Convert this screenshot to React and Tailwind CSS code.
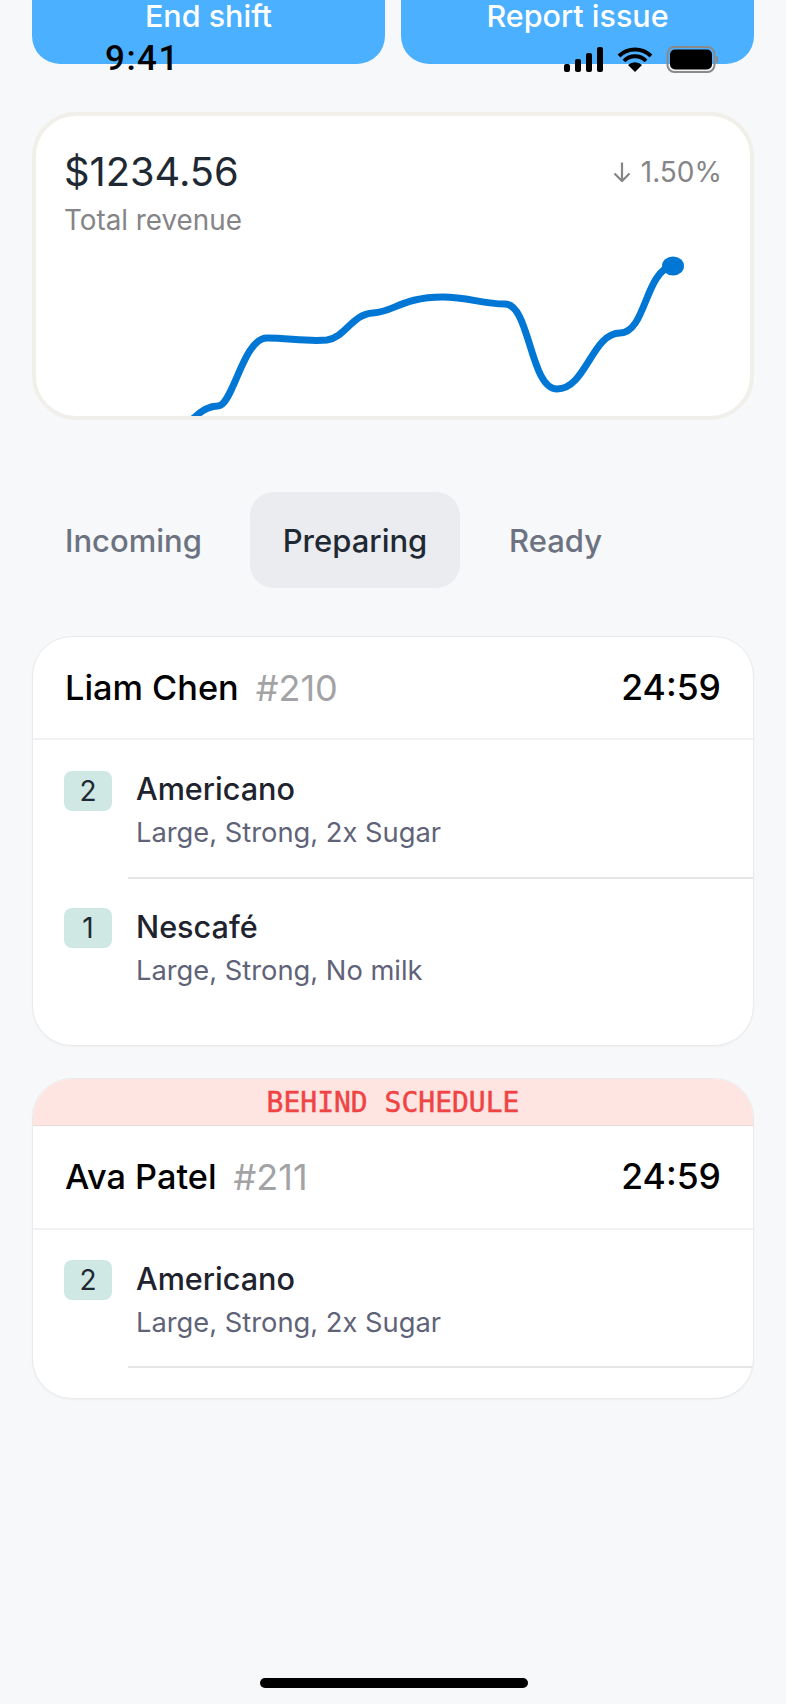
import React from "react";

const CURVE = "M190 422 C197 414 207 406 218 406 C233 406 243 338 267 338 C288 338 308 342 327 340 C346 337 352 314 373 313 C394 312 402 297 443 297 C468 297 482 304 505 304 C530 304 530 389 557 389 C586 389 592 333 620 333 C646 333 645 270 673 266";

function Item({ qty, name, opts, badgeTop, textTop, textBottom }) {
  return (
    <div className="flex">
      <div className="w-[103px] pl-[31px] shrink-0" style={{ paddingTop: badgeTop }}>
        <div className="w-[48px] h-[40px] rounded-[8px] bg-[#cfe8e4] flex items-center justify-center text-[28px] text-[#1f2933]">{qty}</div>
      </div>
      <div className="flex-1" style={{ paddingTop: textTop, paddingBottom: textBottom }}>
        <div className="text-[30.6px] leading-[44px] font-[450] text-[#20222e]">{name}</div>
        <div className="text-[27.3px] leading-[40px] text-[#5f6378] mt-[2px]">{opts}</div>
      </div>
    </div>
  );
}

function OrderHeader({ name, id, tall }) {
  return (
    <div className={`${tall ? "h-[104px]" : "h-[103px]"} border-b-2 border-[#f0f1f5] flex items-center justify-between px-[32px]`}>
      <div className="flex items-center gap-[17px]">
        <span className="text-[34.3px] font-[450] text-black">{name}</span>
        <span className="text-[36px] text-[#a3a3a5]">{id}</span>
      </div>
      <span className="text-[35.5px] font-[450] text-black">24:59</span>
    </div>
  );
}

export default function App() {
  return (
    <div className="relative w-[786px] h-[1704px] overflow-hidden bg-[#f6f8fa]" style={{ fontFamily: "Inter, sans-serif" }}>
      <div className="flex gap-[16px] px-[32px] h-[64px]">
        <button className="flex-1 pb-[32px] rounded-b-[28px] bg-[#4ab0ff] text-white text-[30.5px] leading-[34px] font-medium flex items-center justify-center">End shift</button>
        <button className="flex-1 pb-[32px] rounded-b-[28px] bg-[#4ab0ff] text-white text-[30.5px] leading-[34px] font-medium flex items-center justify-center">Report issue</button>
      </div>

      {/* status bar */}
      <div className="absolute left-[105px] top-[39px] text-[35px] leading-[40px] font-medium tracking-[1.5px] text-black" style={{ fontFamily: "Roboto, sans-serif" }}>9:41</div>
      <svg className="absolute left-[560px] top-[44px]" width="160" height="30" viewBox="0 0 160 30">
        <rect x="4" y="20" width="6" height="8" rx="2" fill="#000" />
        <rect x="15" y="15" width="6" height="13" rx="2" fill="#000" />
        <rect x="26" y="9" width="6" height="19" rx="2" fill="#000" />
        <rect x="37" y="3" width="6" height="25" rx="2" fill="#000" />
        <path d="M59 12 A23 23 0 0 1 91 12" fill="none" stroke="#000" strokeWidth="4" />
        <path d="M64 17 A15 15 0 0 1 86 17" fill="none" stroke="#000" strokeWidth="4" />
        <path d="M75 28 L68 21 A10 10 0 0 1 82 21 Z" fill="#000" />
        <rect x="107.5" y="3" width="47" height="25" rx="7" fill="none" stroke="#8a8a8a" strokeWidth="2" />
        <rect x="110" y="5.5" width="42" height="20" rx="5" fill="#000" />
        <rect x="156" y="12" width="2" height="7" rx="1" fill="#8a8a8a" />
      </svg>

      {/* revenue card */}
      <div className="relative mt-[48px] ml-[32px] w-[722px] h-[308px] rounded-[44px] border-4 border-[#f0efea] bg-white overflow-hidden">
        <div className="flex justify-between px-[28px] pt-[28px]">
          <div>
            <div className="text-[39.8px] leading-[56px] text-[#1f2933]">$1234.56</div>
            <div className="text-[27.8px] leading-[36px] mt-[2px] text-[#858587]">Total revenue</div>
          </div>
          <div className="flex items-center h-[56px] gap-[10px] text-[28px] text-[#858587]">
            <svg width="18" height="20" viewBox="0 0 18 20" fill="none" stroke="#858587" strokeWidth="2.2"><path d="M9 0.5V19M1.5 11.5L9 19L16.5 11.5" /></svg>
            <span>1.50%</span>
          </div>
        </div>
        <svg className="absolute left-[-36px] top-[-116px]" width="786" height="440" viewBox="0 0 786 440">
          <path d={CURVE} fill="none" stroke="#0077d4" strokeWidth="7" strokeLinecap="round" strokeLinejoin="round" />
          <ellipse cx="673" cy="266" rx="11" ry="9.5" fill="#0077d4" />
        </svg>
      </div>

      {/* tabs */}
      <div className="flex mt-[72px] pl-[32px] h-[96px] text-[31px] font-medium">
        <div className="w-[168px] rounded-[24px] pl-[33px] pt-[2px] flex items-center text-[#6c7280]">Incoming</div>
        <div className="ml-[50px] w-[210px] rounded-[24px] pt-[2px] bg-[#ebecf0] flex items-center justify-center text-[#1f2933]">Preparing</div>
        <div className="ml-[9px] px-[40px] rounded-[24px] pt-[2px] flex items-center text-[#6c7280]">Ready</div>
      </div>

      {/* order 1 */}
      <div className="mt-[48px] ml-[32px] w-[722px] h-[410px] rounded-[40px] border border-[#e9eaec] bg-white overflow-hidden shadow-[0_1px_2px_rgba(0,0,0,0.04)]">
        <OrderHeader name="Liam Chen" id="#210" />
        <Item qty="2" name="Americano" opts="Large, Strong, 2x Sugar" badgeTop={31} textTop={27} textBottom={24} />
        <div className="ml-[95px] h-[2px] bg-[#e4e5e7]" />
        <Item qty="1" name="Nescafé" opts="Large, Strong, No milk" badgeTop={29} textTop={26} textBottom={24} />
      </div>

      {/* order 2 */}
      <div className="mt-[32px] ml-[32px] w-[722px] h-[321px] rounded-[40px] border border-[#e9eaec] bg-white overflow-hidden shadow-[0_1px_2px_rgba(0,0,0,0.04)]">
        <div className="h-[47px] pt-[2px] bg-[#ffe5e2] border-b border-[#e8dbd9] flex items-center justify-center text-[28px] text-[#ef4444] [-webkit-text-stroke:0.5px_#ef4444]" style={{ fontFamily: "'DejaVu Sans Mono', monospace" }}>BEHIND SCHEDULE</div>
        <OrderHeader name="Ava Patel" id="#211" tall />
        <Item qty="2" name="Americano" opts="Large, Strong, 2x Sugar" badgeTop={30} textTop={27} textBottom={23} />
        <div className="ml-[95px] h-[2px] bg-[#e4e5e7]" />
      </div>

      <div className="absolute left-[260px] bottom-[16px] w-[268px] h-[10px] rounded-full bg-black" />
    </div>
  );
}
